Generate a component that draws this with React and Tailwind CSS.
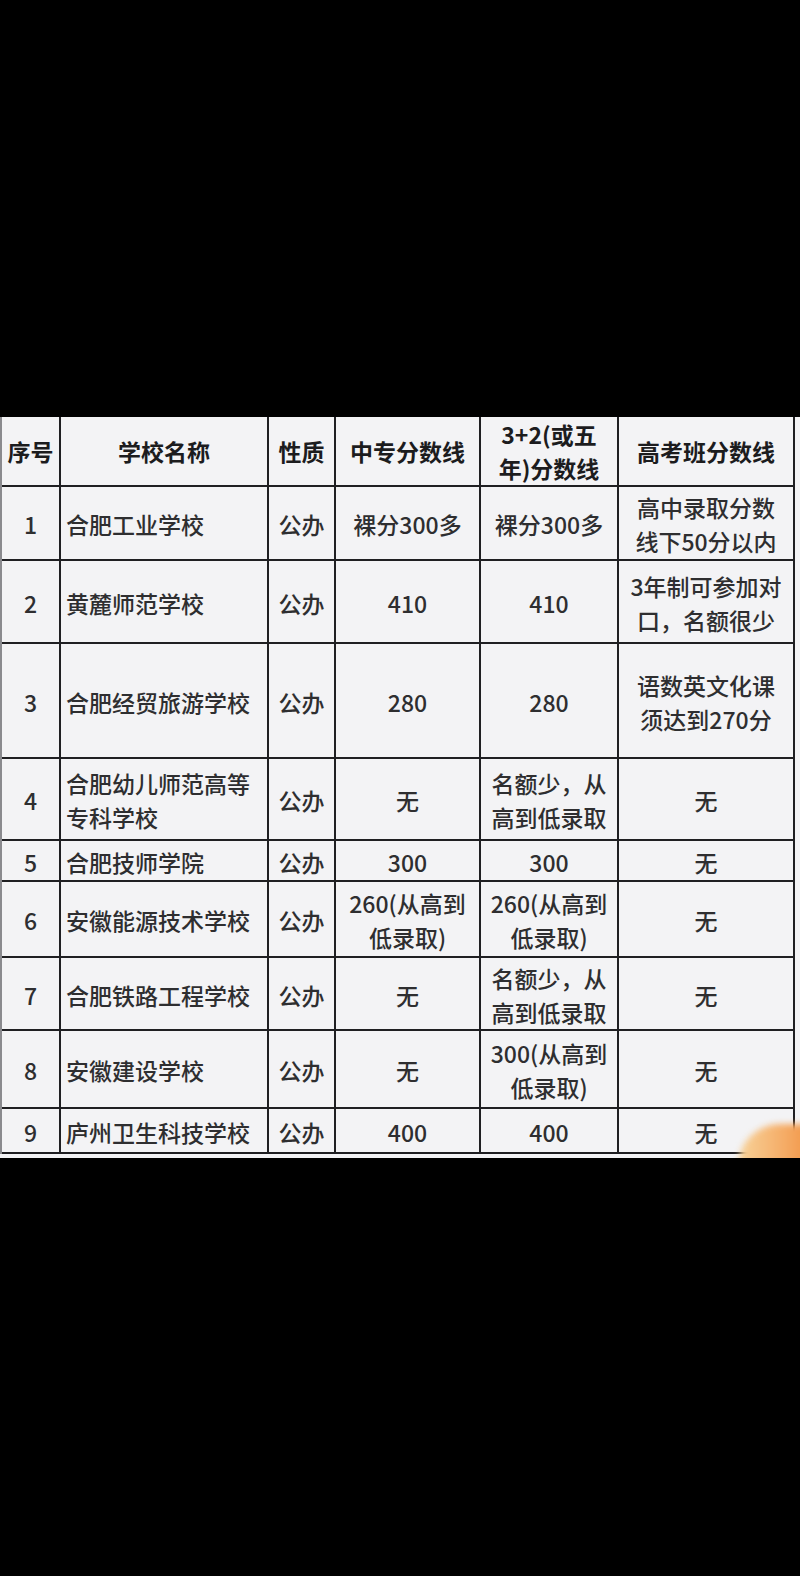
const head = ["序号", "学校名称", "性质", "中专分数线", ["3+2(或五", "年)分数线"], "高考班分数线"];

const rows = [
  ["1", "合肥工业学校", "公办", "裸分300多", "裸分300多", ["高中录取分数", "线下50分以内"]],
  ["2", "黄麓师范学校", "公办", "410", "410", ["3年制可参加对", "口，名额很少"]],
  ["3", "合肥经贸旅游学校", "公办", "280", "280", ["语数英文化课", "须达到270分"]],
  ["4", ["合肥幼儿师范高等", "专科学校"], "公办", "无", ["名额少，从", "高到低录取"], "无"],
  ["5", "合肥技师学院", "公办", "300", "300", "无"],
  ["6", "安徽能源技术学校", "公办", ["260(从高到", "低录取)"], ["260(从高到", "低录取)"], "无"],
  ["7", "合肥铁路工程学校", "公办", "无", ["名额少，从", "高到低录取"], "无"],
  ["8", "安徽建设学校", "公办", "无", ["300(从高到", "低录取)"], "无"],
  ["9", "庐州卫生科技学校", "公办", "400", "400", "无"],
];

function Text({ value }) {
  const lines = Array.isArray(value) ? value : [value];
  return (
    <div className="flex flex-col">
      {lines.map((l, i) => (
        <div key={i} className="leading-[34px] whitespace-nowrap">
          {l}
        </div>
      ))}
    </div>
  );
}

export default function App() {
  return (
    <div
      className="w-[800px] h-[1576px] bg-black pt-[417px]"
      style={{ fontFamily: '"Noto Sans CJK SC", "Noto Sans", sans-serif' }}
    >
      <div className="relative w-[800px] h-[741px] bg-[#f3f3f5] overflow-hidden">
        <div className="flex">
          <div className="w-[2px] h-[737px] bg-[#8a8a8e]" />
          <div className="grid grid-cols-[59px_208px_67px_145px_138px_176px] grid-rows-[70px_74px_83px_115px_82px_41px_76px_73px_78px_45px] text-[#2e2e30]">
            {head.map((h, i) => (
              <div
                key={"h" + i}
                className="flex items-center justify-center text-center border-r-2 border-b-2 border-[#1f1f22] text-[23px] font-bold text-[#1c1c1e] overflow-visible"
              >
                <Text value={h} />
              </div>
            ))}
            {rows.map((r, ri) =>
              r.map((c, ci) => (
                <div
                  key={ri + "-" + ci}
                  className={
                    "flex items-center border-r-2 border-b-2 border-[#1f1f22] text-[23px] font-medium pt-[2px] " +
                    (ci === 1 ? "justify-start pl-[5px] text-left" : "justify-center text-center")
                  }
                >
                  <Text value={c} />
                </div>
              ))
            )}
          </div>
        </div>
        <div className="absolute left-[738px] top-[707px] w-[170px] h-[84px] rounded-full bg-gradient-to-r from-[#f7d39a] via-[#f08a32] to-[#e64f2a] blur-[3px]" />
      </div>
    </div>
  );
}
